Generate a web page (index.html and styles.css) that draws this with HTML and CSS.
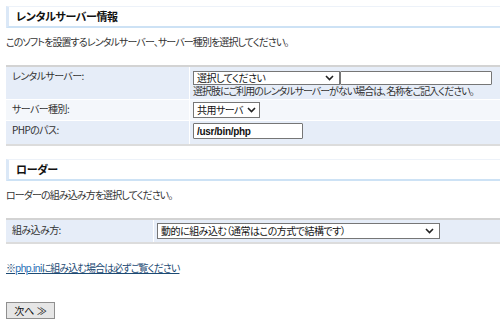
FILE: index.html
```html
<!doctype html>
<html>

	<head>
		<title>インストール</title>
		<meta charset="utf-8" />
		<link rel="stylesheet" href="styles.css">
	</head>

	<body>

		<h2 class="head">レンタルサーバー情報</h2>
		<p class="lead">このソフトを設置するレンタルサーバー、サーバー種別を選択してください。</p>

		<table class="form server">
			<tr class="odd r1">
				<th>レンタルサーバー:</th>
				<td>
					<div class="line"><select class="sel sel-host">
						<option>選択してください</option>
					</select><input class="txt txt-host" type="text" value="" /></div>
					<div class="hint">選択肢にご利用のレンタルサーバーがない場合は、名称をご記入ください。</div>
				</td>
			</tr>
			<tr class="even r2">
				<th>サーバー種別:</th>
				<td>
					<select class="sel sel-type">
						<option>共用サーバ</option>
					</select>
				</td>
			</tr>
			<tr class="odd r3">
				<th>PHPのパス:</th>
				<td><input class="txt txt-path" type="text" value="/usr/bin/php" /></td>
			</tr>
		</table>

		<h2 class="head head-2">ローダー</h2>
		<p class="lead">ローダーの組み込み方を選択してください。</p>

		<table class="form loader">
			<tr class="odd r4">
				<th>組み込み方:</th>
				<td>
					<select class="sel sel-load">
						<option>動的に組み込む（通常はこの方式で結構です）</option>
					</select>
				</td>
			</tr>
		</table>

		<p class="note"><a href="#">※<span class="ini">php.ini</span>に組み込む場合は必ずご覧ください</a></p>

		<p class="next"><button class="btn" type="button">次へ ≫</button></p>

	</body>

</html>
```

FILE: styles.css
```css
body {
	margin: 6px 0 0 6px;
	background: #fff;
	color: #333;
	font: 10px/12px "Noto Sans CJK JP", "Liberation Sans", sans-serif;
	font-feature-settings: "palt";
	letter-spacing: -0.9px;
}

.head {
	margin: 0;
	height: 19px;
	padding-left: 7px;
	border-top: 1px solid #edf2f9;
	border-left: 3px solid #dbe8f7;
	border-bottom: 2px solid #cde2f5;
	font-size: 11px;
	line-height: 19px;
	font-weight: bold;
	color: #111;
	letter-spacing: -0.4px;
}

.head-2 {
	margin-top: 13px;
}

.lead {
	margin: 8px 0 17px;
}

.form {
	width: 100%;
	border-collapse: separate;
	border-spacing: 0;
	border-top: 2px solid #d3d3d3;
	border-bottom: 2px solid #dcdcdc;
}

.form th,
.form td {
	padding: 0;
	vertical-align: top;
	border-bottom: 1px solid #fff;
}

.form tr:last-child th,
.form tr:last-child td {
	border-bottom: none;
}

.form th {
	font-weight: normal;
	text-align: left;
	padding-left: 6px;
	border-right: 1px solid #fff;
	letter-spacing: -0.6px;
}

.form td {
	padding-left: 3px;
}

.server th {
	width: 177px;
}

.loader th {
	width: 141px;
}

.r1 th {
	padding-top: 3px;
}

.r1 td {
	padding-top: 4px;
	padding-bottom: 2px;
}

.r2 th {
	padding-top: 3px;
}

.r2 td {
	padding-top: 2px;
	padding-bottom: 2px;
}

.r3 th {
	padding-top: 3px;
}

.r3 td {
	padding-top: 2px;
	padding-bottom: 5px;
}

.r4 th {
	padding-top: 4px;
}

.r4 td {
	padding-top: 3px;
	padding-bottom: 3px;
}

.odd th,
.odd td {
	background: #e6edf8;
}

.even th,
.even td {
	background: #f4f7fb;
}

.line {
	height: 14px;
}

.sel {
	-webkit-appearance: none;
	appearance: none;
	box-sizing: border-box;
	height: 14px;
	margin: 0;
	padding: 0 14px 0 3px;
	border: 1px solid #767676;
	border-radius: 0;
	background: #fff url("data:image/svg+xml,%3Csvg xmlns='http://www.w3.org/2000/svg' width='9' height='6'%3E%3Cpath d='M1 1l3.5 3.5L8 1' fill='none' stroke='%23222' stroke-width='1.6'/%3E%3C/svg%3E") no-repeat right 5px center;
	font: 10px/12px "Noto Sans CJK JP", sans-serif;
	font-feature-settings: "palt";
	letter-spacing: -0.5px;
	color: #111;
	vertical-align: top;
}

.sel-host {
	width: 147px;
}

.sel-type {
	width: 67px;
	height: 16px;
	padding-right: 12px;
	background-position: right 3px center;
}

.sel-load {
	width: 283px;
	height: 16px;
}

.txt {
	box-sizing: border-box;
	height: 14px;
	margin: 0;
	padding: 0 3px;
	border: 1px solid #767676;
	border-radius: 1px;
	font: 10px/12px "Liberation Sans", sans-serif;
	color: #111;
	vertical-align: top;
}

.txt-host {
	width: 152px;
}

.txt-path {
	width: 110px;
	height: 16px;
	font-weight: bold;
	letter-spacing: -0.3px;
}

.hint {
	line-height: 12px;
	white-space: nowrap;
	letter-spacing: -1px;
}

.note {
	margin: 18px 0 0;
}

.note a {
	color: #1c4a73;
	text-decoration: underline;
}

.note .ini {
	color: #1f6fb5;
}

.next {
	margin: 28px 0 0;
}

.btn {
	width: 49px;
	height: 17px;
	padding: 0;
	border: 1px solid #8f8f8f;
	border-radius: 0;
	background: #e6e6e6;
	font: 10px/13px "Noto Sans CJK JP", sans-serif;
	font-feature-settings: "palt";
	letter-spacing: 0;
	color: #111;
}
```
